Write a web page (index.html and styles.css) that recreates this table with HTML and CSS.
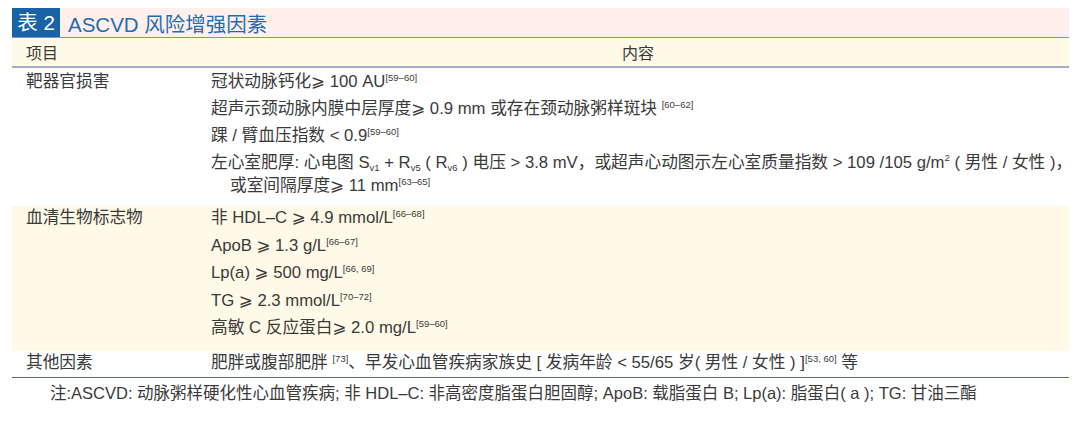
FILE: index.html
```html
<!DOCTYPE html>
<html lang="zh-CN">
  <head>
    <meta charset="UTF-8" />
    <meta name="viewport" content="width=device-width, initial-scale=1.0" />
    <title>表 2 ASCVD 风险增强因素</title>
    <link rel="stylesheet" href="styles.css">
  </head>
  <body>
    <div class="sheet">
      <div class="caption">
        <span class="tag">表 2</span>
        <span class="caption-text">ASCVD 风险增强因素</span>
      </div>

      <table class="factors">
        <thead>
          <tr>
            <th class="col-item">项目</th>
            <th class="col-content">内容</th>
          </tr>
        </thead>
        <tbody>
          <tr class="row-organ">
            <td class="col-item">靶器官损害</td>
            <td class="col-content">
              <div class="line">冠状动脉钙化⩾ 100 AU<sup>[59–60]</sup></div>
              <div class="line">超声示颈动脉内膜中层厚度⩾ 0.9 mm 或存在颈动脉粥样斑块 <sup>[60–62]</sup></div>
              <div class="line">踝 / 臂血压指数 &lt; 0.9<sup>[59–60]</sup></div>
              <div class="line">左心室肥厚: 心电图 S<sub>v1</sub> + R<sub>v5</sub> ( R<sub>v6</sub> ) 电压 &gt; 3.8 mV，或超声心动图示左心室质量指数 &gt; 109 /105 g/m<sup class="pow">2</sup> ( 男性 / 女性 )，</div>
              <div class="line wrap">或室间隔厚度⩾ 11 mm<sup>[63–65]</sup></div>
            </td>
          </tr>
          <tr class="row-serum">
            <td class="col-item">血清生物标志物</td>
            <td class="col-content">
              <div class="line">非 HDL–C ⩾ 4.9 mmol/L<sup>[66–68]</sup></div>
              <div class="line">ApoB ⩾ 1.3 g/L<sup>[66–67]</sup></div>
              <div class="line">Lp(a) ⩾ 500 mg/L<sup>[66, 69]</sup></div>
              <div class="line">TG ⩾ 2.3 mmol/L<sup>[70–72]</sup></div>
              <div class="line">高敏 C 反应蛋白⩾ 2.0 mg/L<sup>[59–60]</sup></div>
            </td>
          </tr>
          <tr class="row-other">
            <td class="col-item">其他因素</td>
            <td class="col-content">
              <div class="line">肥胖或腹部肥胖 <sup>[73]</sup>、早发心血管疾病家族史 [ 发病年龄 &lt; 55/65 岁( 男性 / 女性 ) ]<sup>[53, 60]</sup> 等</div>
            </td>
          </tr>
        </tbody>
      </table>

      <p class="note">注:ASCVD: 动脉粥样硬化性心血管疾病; 非 HDL–C: 非高密度脂蛋白胆固醇; ApoB: 载脂蛋白 B; Lp(a): 脂蛋白( a ); TG: 甘油三酯</p>
    </div>
  </body>
</html>
```

FILE: styles.css
```css
body {
  margin: 0;
  background-color: #ffffff;
  font-family: "Liberation Sans", "Noto Sans CJK SC", "DejaVu Sans", sans-serif;
  color: #3a3a3a;
}

.sheet {
  width: 1057px;
  margin: 8px 0 0 12px;
}

.caption {
  display: flex;
  align-items: center;
  height: 29px;
  background-color: #fff0eb;
  border-bottom: 1px solid #7d8fc4;
}

.tag {
  width: 48px;
  height: 29px;
  line-height: 29px;
  text-align: center;
  background-color: #1763a6;
  color: #ffffff;
  font-size: 20.5px;
}

.caption-text {
  margin-left: 8px;
  color: #1f6db0;
  font-size: 20.5px;
}

.factors {
  width: 100%;
  table-layout: fixed;
  border-collapse: collapse;
  font-size: 16.7px;
}

.factors th {
  height: 28px;
  padding: 0;
  font-size: 16px;
  font-weight: normal;
  background-color: #fff9e7;
  border-bottom: 2px solid #a4aeca;
}

.factors th.col-item {
  width: 173px;
  text-align: left;
  padding-left: 14px;
}

.factors th.col-content {
  padding-left: 8px;
}

.factors td {
  padding: 0;
  vertical-align: top;
}

.factors td.col-item {
  padding-left: 14px;
  line-height: 23px;
}

.factors td.col-content {
  padding-left: 12px;
}

.line {
  line-height: 23px;
  height: 23px;
  margin-bottom: 4px;
  white-space: nowrap;
}

.line.wrap {
  margin-top: -4px;
  padding-left: 19px;
}

.row-organ td {
  padding-top: 2px;
  padding-bottom: 5px;
}

.row-serum td {
  background-color: #fff9e7;
  padding-top: 0;
  padding-bottom: 7px;
}

.row-serum .line {
  margin-bottom: 4.5px;
}

.row-other td {
  padding-top: 0;
  padding-bottom: 0;
  border-bottom: 1.5px solid #5366ab;
}

.row-other .line {
  margin-bottom: 3px;
}

sup {
  font-size: 9.5px;
  vertical-align: 6px;
  line-height: 0;
}

sup.pow {
  font-size: 9.5px;
  vertical-align: 7px;
}

sub {
  font-size: 9.5px;
  vertical-align: -3px;
  line-height: 0;
}

.note {
  margin: 4px 0 0 38px;
  font-size: 16.5px;
  line-height: 23px;
}
```
